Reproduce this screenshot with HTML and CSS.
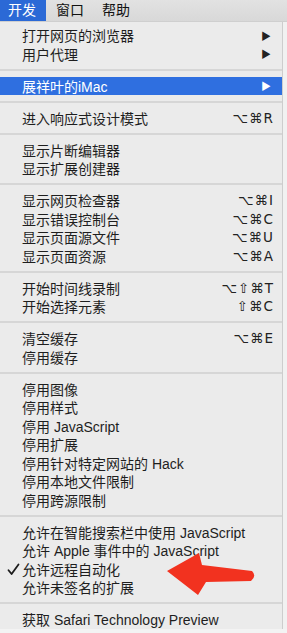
FILE: index.html
```html
<!DOCTYPE html>
<html lang="zh-CN">
<head>
    <meta charset="UTF-8">
    <meta name="viewport" content="width=device-width, initial-scale=1.0">
    <title>开发菜单</title>
    <link rel="stylesheet" href="styles.css">
</head>
<body>

    <div class="menubar">
        <div class="menubar-item active">开发</div>
        <div class="menubar-item">窗口</div>
        <div class="menubar-item">帮助</div>
    </div>

    <div class="page">
        <div class="menu">
            <div class="menu-item">打开网页的浏览器<span class="submenu-arrow">▶</span></div>
            <div class="menu-item">用户代理<span class="submenu-arrow">▶</span></div>
            <div class="menu-sep"></div>
            <div class="menu-item selected">展祥叶的iMac<span class="submenu-arrow">▶</span></div>
            <div class="menu-sep"></div>
            <div class="menu-item">进入响应式设计模式<span class="shortcut">⌥⌘R</span></div>
            <div class="menu-sep"></div>
            <div class="menu-item">显示片断编辑器</div>
            <div class="menu-item">显示扩展创建器</div>
            <div class="menu-sep"></div>
            <div class="menu-item">显示网页检查器<span class="shortcut">⌥⌘I</span></div>
            <div class="menu-item">显示错误控制台<span class="shortcut">⌥⌘C</span></div>
            <div class="menu-item">显示页面源文件<span class="shortcut">⌥⌘U</span></div>
            <div class="menu-item">显示页面资源<span class="shortcut">⌥⌘A</span></div>
            <div class="menu-sep"></div>
            <div class="menu-item">开始时间线录制<span class="shortcut">⌥⇧⌘T</span></div>
            <div class="menu-item">开始选择元素<span class="shortcut">⇧⌘C</span></div>
            <div class="menu-sep"></div>
            <div class="menu-item">清空缓存<span class="shortcut">⌥⌘E</span></div>
            <div class="menu-item">停用缓存</div>
            <div class="menu-sep"></div>
            <div class="menu-item">停用图像</div>
            <div class="menu-item">停用样式</div>
            <div class="menu-item">停用 JavaScript</div>
            <div class="menu-item">停用扩展</div>
            <div class="menu-item">停用针对特定网站的 Hack</div>
            <div class="menu-item">停用本地文件限制</div>
            <div class="menu-item">停用跨源限制</div>
            <div class="menu-sep"></div>
            <div class="menu-item">允许在智能搜索栏中使用 JavaScript</div>
            <div class="menu-item">允许 Apple 事件中的 JavaScript</div>
            <div class="menu-item checked">
                <svg class="check" width="13" height="13" viewBox="0 0 13 13">
                    <path d="M1.5 7.2 L4.6 11 L11.5 1.5" fill="none" stroke="#1b1b1b" stroke-width="1.8" stroke-linecap="round" stroke-linejoin="round"/>
                </svg>
                允许远程自动化
            </div>
            <div class="menu-item">允许未签名的扩展</div>
            <div class="menu-sep"></div>
            <div class="menu-item">获取 Safari Technology Preview</div>
        </div>
        <div class="backdrop"></div>
    </div>

    <!-- red annotation arrow drawn over the menu -->
    <svg class="annotation" width="287" height="633" viewBox="0 0 287 633">
        <path d="M167 571 L199 553 L202 565 L252 571 Q257 576 251 581 L206 582 L198 595 Z" fill="#f2321f"/>
    </svg>

</body>
</html>
```

FILE: styles.css
```css
body {
    margin: 0;
    width: 287px;
    height: 633px;
    overflow: hidden;
    position: relative;
    font-family: "Liberation Sans", "Noto Sans CJK SC", sans-serif;
    font-size: 14px;
    color: #1e1e1e;
    background-color: #f3f3f3;
}

.menubar {
    display: flex;
    height: 22px;
    background: linear-gradient(#e2e2e2, #d8d8d8);
    border-bottom: 1px solid #cfcfcf;
    box-sizing: border-box;
}

.menubar-item {
    padding: 0 8px 0 10px;
    line-height: 21px;
    font-size: 14px;
    color: #111;
}

.menubar-item.active {
    background-color: #2b69d6;
    color: #fff;
    padding: 0 10px 0 8px;
}

.page {
    display: flex;
}

.menu {
    width: 283px;
    padding-top: 4px;
    background-color: #ebebeb;
    border-right: 1px solid #cdcdcd;
    box-sizing: border-box;
}

.backdrop {
    flex: 1;
    background-color: #f1f1f1;
}

.menu-item {
    position: relative;
    display: flex;
    align-items: center;
    justify-content: space-between;
    height: 18.5px;
    padding: 0 8px 0 22px;
    white-space: nowrap;
}

.menu-item.selected {
    background-color: #2f6fe0;
    color: #fff;
}

.submenu-arrow {
    font-size: 10px;
    padding-right: 3px;
    color: #222;
}

.menu-item.selected .submenu-arrow {
    color: #fff;
}

.shortcut {
    font-family: "DejaVu Sans", sans-serif;
    font-size: 13.5px;
    letter-spacing: 1px;
    color: #222;
}

.checked {
    justify-content: flex-start;
}

.check {
    position: absolute;
    left: 7px;
    top: 3px;
}

.menu-sep {
    height: 13.5px;
    display: flex;
    align-items: center;
}

.menu-sep::after {
    content: "";
    flex: 1;
    height: 2px;
    background-color: #d6d6d6;
}

.annotation {
    position: absolute;
    left: 0;
    top: 0;
    pointer-events: none;
}
```
